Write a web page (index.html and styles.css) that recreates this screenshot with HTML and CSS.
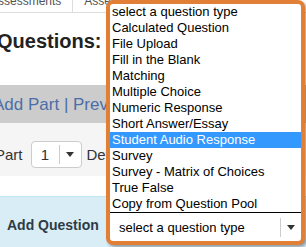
FILE: index.html
```html
<!DOCTYPE html>
<html lang="en">
<head>
    <meta charset="UTF-8">
    <title>Add Question</title>
    <link rel="stylesheet" href="styles.css">
</head>
<body>
    <div class="page">
        <div class="tabs">
            <span class="tab tab-first">Assessments</span>
            <span class="tab">Assessment Settings</span>
        </div>
        <h2 class="title">Questions:</h2>
        <div class="toolbar">
            <a href="#">Add Part</a> | <a href="#">Preview</a>
        </div>
        <div class="part-row">
            <span class="part-label">Part</span>
            <span class="num-select">
                <span class="num-value">1</span>
                <span class="num-arrow"><span class="caret"></span></span>
            </span>
            <span class="part-label">Default Points</span>
        </div>
        <div class="add-row">
            <span class="add-label">Add Question</span>
        </div>
    </div>

    <div class="dropdown">
        <ul class="options">
            <li>select a question type</li>
            <li>Calculated Question</li>
            <li>File Upload</li>
            <li>Fill in the Blank</li>
            <li>Matching</li>
            <li>Multiple Choice</li>
            <li>Numeric Response</li>
            <li>Short Answer/Essay</li>
            <li class="selected">Student Audio Response</li>
            <li>Survey</li>
            <li>Survey - Matrix of Choices</li>
            <li>True False</li>
            <li>Copy from Question Pool</li>
        </ul>
        <div class="picker">
            <span class="picker-text">select a question type</span>
            <span class="picker-arrow"><span class="caret"></span></span>
        </div>
    </div>
</body>
</html>
```

FILE: styles.css
```css
body {
    margin: 0;
    width: 306px;
    height: 247px;
    overflow: hidden;
    font-family: 'Liberation Sans', Arial, sans-serif;
    background: white;
    color: #333;
}

.page {
    width: 306px;
}

/* top tabs, mostly scrolled off */
.tabs {
    display: flex;
    align-items: flex-end;
    height: 12px;
    border-bottom: 1px solid #ddd;
    overflow: hidden;
    margin-left: -21px;
}

.tab {
    font-size: 12px;
    line-height: 14px;
    color: #555;
    padding: 0 11px 4px 11px;
    border-right: 1px solid #ddd;
    white-space: nowrap;
}

.title {
    font-size: 20px;
    line-height: 24px;
    font-weight: bold;
    color: #222;
    margin: 16px 0 32px -3px;
}

.toolbar {
    height: 38px;
    line-height: 40px;
    overflow: hidden;
    background-color: #cccccc;
    font-size: 17px;
    color: #4b6ea8;
    margin-left: -7px;
    white-space: nowrap;
}

.toolbar a {
    color: #4b6ea8;
    text-decoration: none;
}

.part-row {
    display: flex;
    align-items: center;
    gap: 5px;
    height: 53px;
    box-sizing: border-box;
    padding-top: 18px;
    padding-bottom: 8px;
    background-color: #f5f5f5;
    font-size: 15px;
    white-space: nowrap;
}

.part-label:first-child {
    margin-left: -5px;
}

.num-select {
    display: flex;
    align-items: center;
    width: 51px;
    height: 27px;
    box-sizing: border-box;
    border: 1px solid #ccc;
    border-radius: 4px;
    background: white;
    margin-left: 3px;
}

.num-value {
    flex: 1;
    text-align: center;
    font-size: 15px;
}

.num-arrow {
    display: flex;
    align-items: center;
    justify-content: center;
    width: 20px;
    height: 19px;
    border-left: 1px solid #ccc;
    padding-right: 1px;
}

.caret {
    width: 0;
    height: 0;
    border-left: 4px solid transparent;
    border-right: 4px solid transparent;
    border-top: 5px solid #333;
}

.add-row {
    margin-top: 20px;
    height: 60px;
    box-sizing: border-box;
    border-top: 1px solid #bce8f1;
    background-color: #d9edf7;
    padding: 18px 0 0 7px;
}

.add-label {
    font-size: 14px;
    line-height: 20px;
    font-weight: bold;
    color: #2d3b45;
}

/* open select list, framed by the orange callout */
.dropdown {
    position: absolute;
    left: 106px;
    top: 0;
    width: 199px;
    height: 245px;
    box-sizing: border-box;
    border: 4px solid #e27f36;
    border-radius: 7px;
    background: white;
    overflow: hidden;
    box-shadow: 2px 2px 3px rgba(0, 0, 0, 0.35);
    font-size: 13px;
    color: #000;
}

.options {
    list-style: none;
    margin: 0;
    padding: 0;
    border-bottom: 1px solid #000;
}

.options li {
    height: 16px;
    line-height: 16px;
    padding-left: 2px;
    white-space: nowrap;
}

.options li.selected {
    background-color: #3399ff;
    color: white;
}

.picker {
    display: flex;
    align-items: center;
    height: 28px;
}

.picker-text {
    flex: 1;
    padding-left: 9px;
    line-height: 16px;
    padding-top: 1px;
}

.picker-arrow {
    display: flex;
    align-items: center;
    justify-content: center;
    width: 20px;
    height: 19px;
    border-left: 1px solid #ccc;
}
```
